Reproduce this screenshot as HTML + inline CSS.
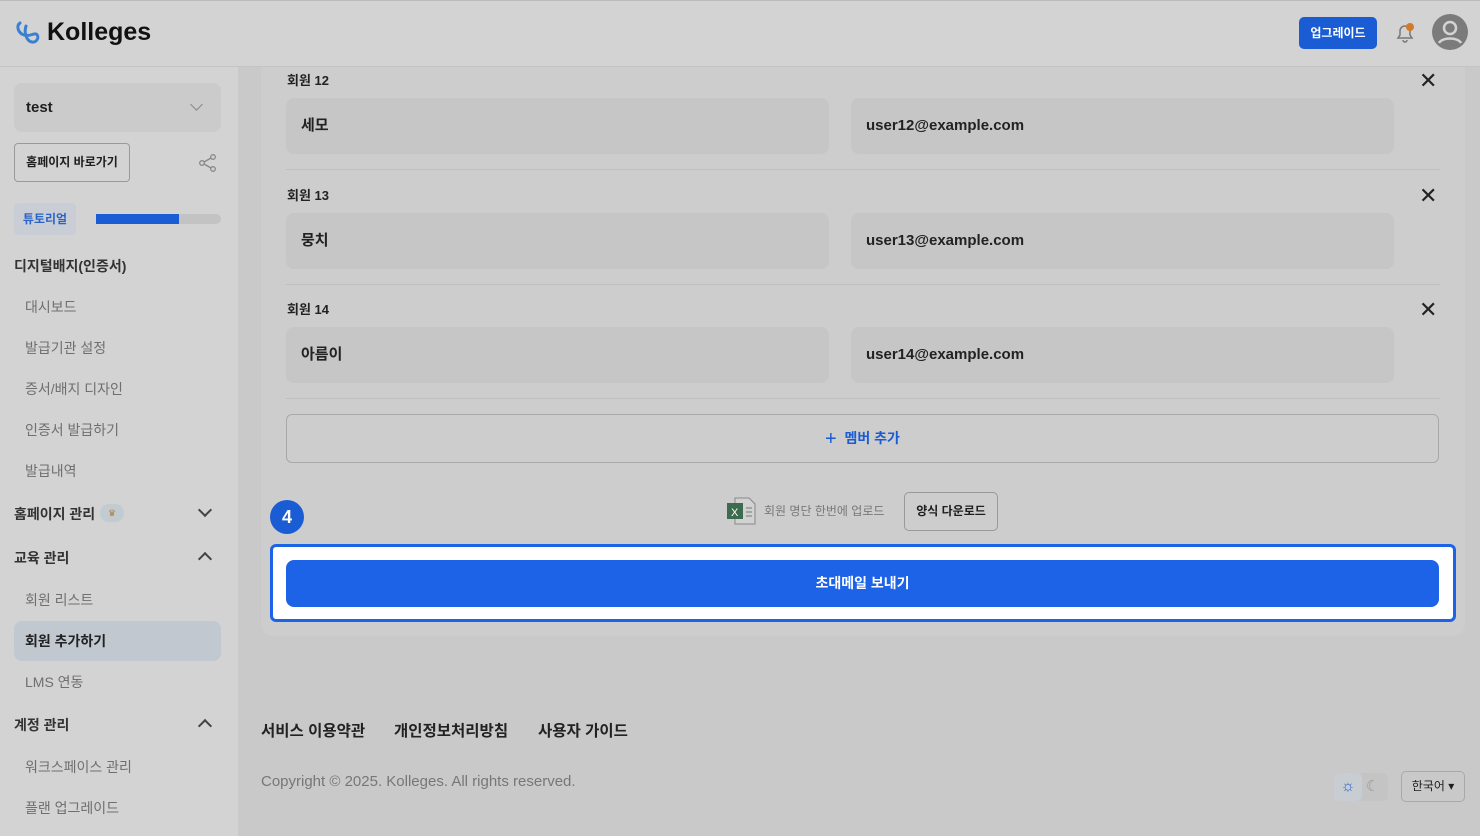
<!DOCTYPE html>
<html><head><meta charset="utf-8"><style>
*{box-sizing:border-box;margin:0;padding:0}
body{width:1480px;height:836px;overflow:hidden;background:#c9c9c9;font-family:"Liberation Sans","Noto Sans CJK KR",sans-serif;color:#1e1e1e;position:relative}
.abs{position:absolute}
.hdr{left:0;top:0;width:1480px;height:67px;background:#d3d3d3;border-bottom:1px solid #c4c4c4;border-top:1px solid #bbb;z-index:5}
.side{left:0;top:67px;width:238px;height:769px;background:#d3d3d3}
.card{left:261px;top:50px;width:1204px;height:586px;background:#cdcdcd;border-radius:12px}
.inp{height:56px;background:#c6c6c6;border-radius:8px;font-size:15px;font-weight:bold;padding:0 15px;line-height:56px;color:#222}
.lbl{font-size:13px;font-weight:bold;color:#222}
.div{left:286px;width:1154px;height:1px;background:#bfbfbf}
.x{font-size:22px;color:#222;line-height:1}
.nav{font-size:14px;color:#6f6f6f;left:25px}
.sec{font-size:14px;font-weight:bold;color:#333;left:14px}
.chev{left:200px;width:10px;height:10px;border-right:2px solid #444;border-bottom:2px solid #444}
.foot{font-size:15.5px;font-weight:bold;color:#222;top:719px}
.z{z-index:6}
</style></head><body>
<div class="abs hdr"></div>
<svg class="abs z" style="left:13px;top:19px" width="30" height="30" viewBox="0 0 30 30"><path d="M7 4c-4 3-2 10 4 12 5 2 10-2 12-1 4 2 1 9-4 8-6-1-8-10-6-16" fill="none" stroke="#3b7fd1" stroke-width="3" stroke-linecap="round"/></svg>
<div class="abs z" style="left:47px;top:18px;font-size:25px;font-weight:bold;color:#111">Kolleges</div>
<div class="abs z" style="left:1299px;top:17px;width:78px;height:32px;background:#1a5cd3;border-radius:5px;color:#fff;font-size:12px;font-weight:bold;text-align:center;line-height:32px">업그레이드</div>
<svg class="abs z" style="left:1394px;top:22px" width="22" height="22" viewBox="0 0 22 22"><path d="M4 16h14l-2-3V9a5 5 0 0 0-10 0v4zM9 18a2 2 0 0 0 4 0" fill="none" stroke="#777" stroke-width="1.5"/><circle cx="16" cy="5" r="4" fill="#d07a2a"/></svg>
<svg class="abs z" style="left:1432px;top:14px" width="36" height="36" viewBox="0 0 36 36"><circle cx="18" cy="18" r="18" fill="#7b7b7b"/><circle cx="18" cy="14" r="6" fill="none" stroke="#d3d3d3" stroke-width="2.5"/><path d="M7 29c3-6 19-6 22 0" fill="none" stroke="#d3d3d3" stroke-width="2.5"/></svg>

<div class="abs side"></div>
<div class="abs" style="left:14px;top:83px;width:207px;height:49px;background:#cbcbcb;border-radius:8px;font-size:15px;font-weight:bold;padding:16px 12px">test</div>
<div class="abs chev" style="left:192px;top:100px;transform:rotate(45deg);width:9px;height:9px;border-color:#888;border-width:1.5px"></div>
<div class="abs" style="left:14px;top:143px;width:116px;height:39px;border:1px solid #999;border-radius:4px;font-size:12px;font-weight:bold;text-align:center;line-height:37px">홈페이지 바로가기</div>
<svg class="abs" style="left:198px;top:153px" width="20" height="20" viewBox="0 0 20 20"><circle cx="15" cy="4" r="2.3" fill="none" stroke="#888" stroke-width="1.3"/><circle cx="4" cy="10" r="2.3" fill="none" stroke="#888" stroke-width="1.3"/><circle cx="15" cy="16" r="2.3" fill="none" stroke="#888" stroke-width="1.3"/><path d="M6 9l7-4M6 11l7 4" stroke="#888" stroke-width="1.3"/></svg>
<div class="abs" style="left:14px;top:203px;width:62px;height:32px;background:#c9ced6;border-radius:4px;color:#2a63c7;font-size:12px;font-weight:bold;text-align:center;line-height:32px">튜토리얼</div>
<div class="abs" style="left:96px;top:214px;width:125px;height:10px;background:#c3c3c3;border-radius:5px"><div style="width:83px;height:10px;background:#1a5cd3"></div></div>
<div class="abs sec" style="top:256px">디지털배지(인증서)</div>
<div class="abs nav" style="top:297px">대시보드</div>
<div class="abs nav" style="top:338px">발급기관 설정</div>
<div class="abs nav" style="top:379px">증서/배지 디자인</div>
<div class="abs nav" style="top:420px">인증서 발급하기</div>
<div class="abs nav" style="top:461px">발급내역</div>
<div class="abs sec" style="top:504px">홈페이지 관리</div>
<div class="abs" style="left:100px;top:504px;width:24px;height:18px;background:#c1cbd0;border-radius:9px;font-size:9px;color:#b77a3a;text-align:center;line-height:18px">♛</div>
<div class="abs chev" style="top:505px;transform:rotate(45deg)"></div>
<div class="abs sec" style="top:548px">교육 관리</div>
<div class="abs chev" style="top:554px;transform:rotate(-135deg)"></div>
<div class="abs nav" style="top:590px">회원 리스트</div>
<div class="abs" style="left:14px;top:621px;width:207px;height:40px;background:#c1c8d0;border-radius:8px"></div>
<div class="abs nav" style="top:631px;color:#222;font-weight:bold">회원 추가하기</div>
<div class="abs nav" style="top:672px">LMS 연동</div>
<div class="abs sec" style="top:715px">계정 관리</div>
<div class="abs chev" style="top:721px;transform:rotate(-135deg)"></div>
<div class="abs nav" style="top:757px">워크스페이스 관리</div>
<div class="abs nav" style="top:798px">플랜 업그레이드</div>

<div class="abs card"></div>
<div class="abs lbl" style="left:287px;top:70px">회원 12</div>
<div class="abs inp" style="left:286px;top:98px;width:543px">세모</div>
<div class="abs inp" style="left:851px;top:98px;width:543px">user12@example.com</div>
<div class="abs x" style="left:1419px;top:70px">✕</div>
<div class="abs div" style="top:169px"></div>
<div class="abs lbl" style="left:287px;top:185px">회원 13</div>
<div class="abs inp" style="left:286px;top:213px;width:543px">뭉치</div>
<div class="abs inp" style="left:851px;top:213px;width:543px">user13@example.com</div>
<div class="abs x" style="left:1419px;top:185px">✕</div>
<div class="abs div" style="top:284px"></div>
<div class="abs lbl" style="left:287px;top:299px">회원 14</div>
<div class="abs inp" style="left:286px;top:327px;width:543px">아름이</div>
<div class="abs inp" style="left:851px;top:327px;width:543px">user14@example.com</div>
<div class="abs x" style="left:1419px;top:299px">✕</div>
<div class="abs div" style="top:398px"></div>
<div class="abs" style="left:286px;top:414px;width:1153px;height:49px;border:1px solid #a9a9a9;border-radius:6px;text-align:center;line-height:47px;color:#1a5cd3;font-size:14px;font-weight:bold"><span style="font-size:20px;font-weight:normal;vertical-align:-2px">+</span>&nbsp; 멤버 추가</div>
<svg class="abs" style="left:726px;top:496px" width="32" height="30" viewBox="0 0 32 30"><path d="M9 2h14l6 6v20H9z" fill="#d2d2d2" stroke="#888"/><rect x="1" y="7" width="16" height="16" fill="#3d6b4e"/><text x="5" y="20" font-size="11" fill="#fff" font-family="Liberation Sans">X</text><path d="M20 12h6M20 16h6M20 20h6" stroke="#777"/></svg>
<div class="abs" style="left:764px;top:502px;font-size:12px;color:#777">회원 명단 한번에 업로드</div>
<div class="abs" style="left:904px;top:492px;width:94px;height:39px;border:1px solid #999;border-radius:5px;font-size:12px;font-weight:bold;text-align:center;line-height:37px">양식 다운로드</div>
<div class="abs" style="left:270px;top:500px;width:34px;height:34px;border-radius:50%;background:#1a5cd3;color:#fff;font-size:18px;font-weight:bold;text-align:center;line-height:34px">4</div>
<div class="abs" style="left:270px;top:544px;width:1186px;height:78px;background:#fff;border:3px solid #1d63e8;border-radius:6px"></div>
<div class="abs" style="left:286px;top:560px;width:1153px;height:47px;background:#1d63e8;border-radius:8px;color:#fff;font-size:14px;font-weight:bold;text-align:center;line-height:47px">초대메일 보내기</div>

<div class="abs foot" style="left:261px">서비스 이용약관</div>
<div class="abs foot" style="left:394px">개인정보처리방침</div>
<div class="abs foot" style="left:538px">사용자 가이드</div>
<div class="abs" style="left:261px;top:773px;font-size:15px;color:#777">Copyright © 2025. Kolleges. All rights reserved.</div>
<div class="abs" style="left:1334px;top:773px;width:54px;height:28px;background:#c4c4c4;border-radius:5px"></div>
<div class="abs" style="left:1334px;top:773px;width:28px;height:28px;background:#c8cdd3;border-radius:5px;color:#2a63c7;font-size:16px;text-align:center;line-height:28px">☼</div>
<div class="abs" style="left:1366px;top:777px;color:#999;font-size:15px">☾</div>
<div class="abs" style="left:1401px;top:771px;width:64px;height:31px;border:1px solid #a9a9a9;border-radius:5px;font-size:12px;text-align:center;line-height:29px">한국어 ▾</div>
</body></html>
